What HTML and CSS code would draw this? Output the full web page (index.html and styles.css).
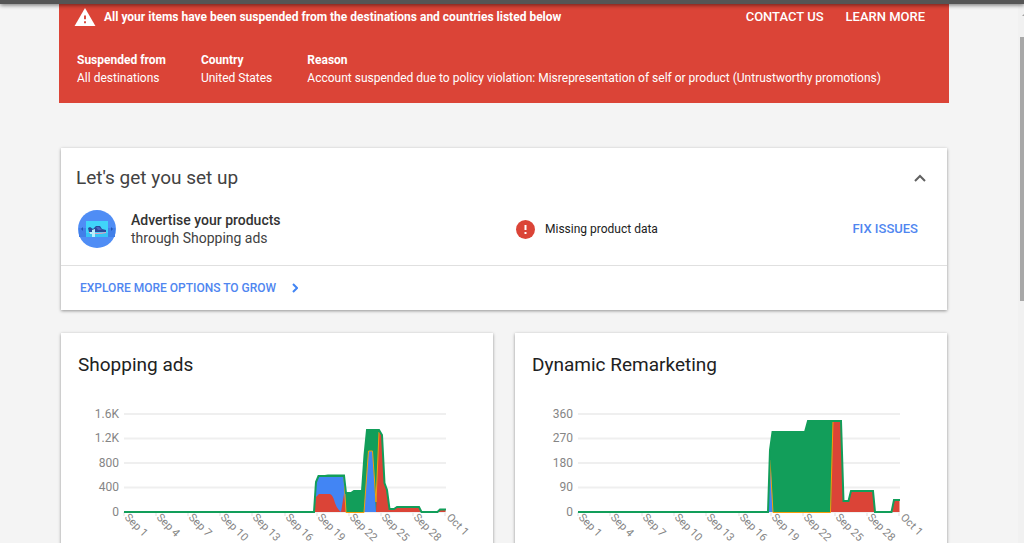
FILE: index.html
```
<!DOCTYPE html>
<html lang="en">
<head>
    <meta charset="utf-8">
    <title>Merchant overview</title>
    <link rel="stylesheet" href="styles.css">
</head>
<body>
    <header class="topbar"></header>
    <div class="scrollbar">
        <svg class="scroll-arrow" viewBox="0 0 4 32" aria-hidden="true">
            <path d="M2 11h2v-1z" fill="#555"/>
        </svg>
        <div class="scroll-thumb"></div>
    </div>
    <main class="page">
        <section class="banner">
            <div class="banner-head">
                <svg class="warning-icon" viewBox="0 0 22 19" aria-hidden="true">
                    <path d="M0 19h22L11 0z" fill="#fff"/>
                    <path d="M10 8h2v4h-2zm0 6h2v2h-2z" fill="#db4437"/>
                </svg>
                <strong class="banner-title">All your items have been suspended from the destinations and countries listed below</strong>
                <nav class="banner-links">
                    <a href="#contact">CONTACT US</a>
                    <a href="#learn">LEARN MORE</a>
                </nav>
            </div>
            <dl class="details">
                <div><dt>Suspended from</dt><dd>All destinations</dd></div>
                <div><dt>Country</dt><dd>United States</dd></div>
                <div><dt>Reason</dt><dd>Account suspended due to policy violation: Misrepresentation of self or product (Untrustworthy promotions)</dd></div>
            </dl>
        </section>

        <section class="card setup">
            <div class="setup-head">
                <h2>Let's get you set up</h2>
                <button class="collapse" type="button" aria-label="Collapse">
                    <svg viewBox="0 0 12 8" width="12" height="8">
                        <path d="M1 7l5-5 5 5" fill="none" stroke="#616161" stroke-width="2"/>
                    </svg>
                </button>
            </div>
            <div class="setup-row">
                <div class="program">
                    <svg class="program-icon" viewBox="0 0 38 38" aria-hidden="true">
                        <circle cx="19" cy="19" r="19" fill="#4f8df5"/>
                        <path d="M1 18h36v9H1z" fill="#417fe8"/>
                        <path d="M8 11h22v16H8z" fill="#40d4fa"/>
                        <path d="M8 23h22v4H8z" fill="#38c4f5"/>
                        <path d="M10 18l2-1 3 2 3-3 4 0 2 3 4 1 0 2H11z" fill="#294a9c"/>
                        <path d="M18 17l3 0 3 3-4 0z" fill="#4b63c0"/>
                        <path d="M11 22q8 2 17 0v1q-9 2-17 0z" fill="#ee9cba"/>
                        <path d="M14 20l3-1v8h-3v-3h-2v-2h2z" fill="#b9eefc"/>
                        <path d="M5 17v4l-2-2zM33 17v4l2-2z" fill="#2457b5"/>
                    </svg>
                    <p><b>Advertise your products</b><br>through Shopping ads</p>
                </div>
                <div class="status">
                    <svg viewBox="0 0 19 19" width="19" height="19" aria-hidden="true">
                        <circle cx="9.500" cy="9.500" r="9.500" fill="#db4437"/>
                        <path d="M8.500 5h2v5h-2zm0 7h2v2h-2z" fill="#fff"/>
                    </svg>
                    <span>Missing product data</span>
                </div>
                <a class="fix" href="#issues">FIX ISSUES</a>
            </div>
            <a class="explore" href="#programs">EXPLORE MORE OPTIONS TO GROW
                <svg viewBox="0 0 6 10" width="6" height="10" aria-hidden="true">
                    <path d="M1 1l4 4-4 4" fill="none" stroke="#4285f4" stroke-width="2"/>
                </svg>
            </a>
        </section>

        <div class="charts">
            <section class="card chart">
                <h2>Shopping ads</h2>
                <svg viewBox="0 0 398 160" role="img" aria-label="Shopping ads by day">
                    <path class="grid" d="M46 14h322M46 38.500h322M46 63h322M46 87.500h322M46 112h322"/>
                    <path class="grid" d="M46 112v4M78 112v4M110 112v4M142 112v4M174 112v4M207 112v4M239 112v4M271 112v4M303 112v4M335 112v4M367 112v4"/>
                    <path class="green" d="M236 112L238 82 240.500 76 247 76 266 75.500 268 93 273 93 276 91 284 91 286.500 55 289 30 301 30 304 35 306.500 83 309 90 311.500 109 311.500 112z"/>
                    <path class="blue" d="M236 112L238 82 241 77 266 77 268 112zM286 112L290.500 51H294.500L298 112z"/>
                    <path class="red" d="M236 112L238 97 241 94H252Q255 95 257 103 259 109 263 112L266 94 268 112zM298 112L301 32 304 36 306.500 83 309 90 311.500 109H316L319 107H341L343.500 112zM359.500 112L362 109H367.500V112z"/>
                    <path class="orange" d="M266 77L268 112.500H286L290.500 51H294.500L298 102 301 32"/>
                    <path class="line" d="M46 112H236L238 82 240.500 76H247L250 75.500H266L268 93H273L276 91H284L286.500 55 289 30H301L304 35 306.500 83 309 90 311.500 109H316L319 107H341L343.500 112H359.500L362 109.500H368"/>
                    <g class="values">
                        <text x="41" y="18">1.6K</text>
                        <text x="41" y="42">1.2K</text>
                        <text x="41" y="67">800</text>
                        <text x="41" y="91">400</text>
                        <text x="41" y="116">0</text>
                    </g>
                    <g class="dates">
                        <text transform="translate(46 118) rotate(45)">Sep 1</text>
                        <text transform="translate(78 118) rotate(45)">Sep 4</text>
                        <text transform="translate(110 118) rotate(45)">Sep 7</text>
                        <text transform="translate(142 118) rotate(45)">Sep 10</text>
                        <text transform="translate(174 118) rotate(45)">Sep 13</text>
                        <text transform="translate(207 118) rotate(45)">Sep 16</text>
                        <text transform="translate(239 118) rotate(45)">Sep 19</text>
                        <text transform="translate(271 118) rotate(45)">Sep 22</text>
                        <text transform="translate(303 118) rotate(45)">Sep 25</text>
                        <text transform="translate(335 118) rotate(45)">Sep 28</text>
                        <text transform="translate(368 118) rotate(45)">Oct 1</text>
                    </g>
                </svg>
            </section>
            <section class="card chart">
                <h2>Dynamic Remarketing</h2>
                <svg viewBox="0 0 398 160" role="img" aria-label="Dynamic Remarketing by day">
                    <path class="grid" d="M46 14h322M46 38.500h322M46 63h322M46 87.500h322M46 112h322"/>
                    <path class="grid" d="M46 112v4M78 112v4M110 112v4M142 112v4M174 112v4M207 112v4M239 112v4M271 112v4M303 112v4M335 112v4M367 112v4"/>
                    <path class="green" d="M236 112L238 50 240.500 31.500H273L276 20.500H301V112z"/>
                    <path class="blue" d="M236 112L238.500 60 241 112z"/>
                    <path class="red" d="M299 112L301 20.500H309L311.500 101H316.500L319 91H341L343 112zM359.500 112L362 99.500H367.500V112z"/>
                    <path class="orange" d="M238 60L241 112.500H298.500L301 21"/>
                    <path class="line" d="M46 112H236L238 50 240.500 32H273L276 21H309L311.500 101H316.500L319 91H341L343 112H359.500L362 100H368"/>
                    <g class="values">
                        <text x="41" y="18">360</text>
                        <text x="41" y="42">270</text>
                        <text x="41" y="67">180</text>
                        <text x="41" y="91">90</text>
                        <text x="41" y="116">0</text>
                    </g>
                    <g class="dates">
                        <text transform="translate(46 118) rotate(45)">Sep 1</text>
                        <text transform="translate(78 118) rotate(45)">Sep 4</text>
                        <text transform="translate(110 118) rotate(45)">Sep 7</text>
                        <text transform="translate(142 118) rotate(45)">Sep 10</text>
                        <text transform="translate(174 118) rotate(45)">Sep 13</text>
                        <text transform="translate(207 118) rotate(45)">Sep 16</text>
                        <text transform="translate(239 118) rotate(45)">Sep 19</text>
                        <text transform="translate(271 118) rotate(45)">Sep 22</text>
                        <text transform="translate(303 118) rotate(45)">Sep 25</text>
                        <text transform="translate(335 118) rotate(45)">Sep 28</text>
                        <text transform="translate(368 118) rotate(45)">Oct 1</text>
                    </g>
                </svg>
            </section>
        </div>
    </main>
</body>
</html>
```

FILE: styles.css
```
* {
    box-sizing: border-box;
}
body {
    margin: 0;
    height: 100vh;
    overflow: hidden;
    background: #f4f4f4;
    color: #212121;
    font: 13px/18px Roboto, sans-serif;
}
h2, p, dl, dd {
    margin: 0;
}
a {
    text-decoration: none;
    font-weight: 500;
}

/* fixed chrome */
.topbar {
    position: relative;
    z-index: 2;
    height: 4px;
    background: #555;
    box-shadow: 0 1px 4px rgba(0, 0, 0, .6);
}
.scrollbar {
    position: fixed;
    top: 4px;
    right: 0;
    bottom: 0;
    width: 6px;
    padding-left: 2px;
    background: #f1f1f1;
}
.scroll-arrow {
    display: block;
    width: 4px;
    height: 33px;
}
.scroll-thumb {
    height: 49%;
    background: #a8a8a8;
}
.page {
    max-width: 938px;
    margin: 0 auto;
    padding: 0 32px 0 16px;
}

/* suspension banner */
.banner {
    padding: 4px 24px 16px 15px;
    background: #db4437;
    color: #fff;
}
.banner-head {
    display: flex;
    align-items: center;
    gap: 8px;
}
.warning-icon {
    width: 22px;
    height: 18px;
}
.banner-title {
    font-size: 12px;
}
.banner-links {
    display: flex;
    gap: 22px;
    margin-left: auto;
}
.banner-links a {
    color: #fff;
}
.details {
    display: flex;
    gap: 35px;
    padding: 25px 0 0 3px;
    font-size: 12px;
}
.details dt {
    font-weight: 700;
}

.card {
    background: #fff;
    box-shadow: 0 1px 3px rgba(0, 0, 0, .4);
}
.card h2 {
    font-size: 19px;
    line-height: 24px;
    font-weight: 400;
}

/* setup card */
.setup {
    margin: 45px 2px 0;
}
.setup-head {
    display: flex;
    justify-content: space-between;
    align-items: center;
    padding: 18px 21px 18px 15px;
}
.setup-head h2 {
    color: #424242;
}
.collapse {
    display: flex;
    padding: 0;
    border: 0;
    background: none;
}
.setup-row {
    display: grid;
    grid-template-columns: 438px 1fr auto;
    align-items: center;
    padding: 2px 29px 17px 17px;
    border-bottom: 1px solid #e0e0e0;
}
.program {
    display: flex;
    align-items: center;
    gap: 15px;
    color: #424242;
    font-size: 14px;
}
.program b {
    font-weight: 500;
    color: #333;
}
.program-icon {
    width: 38px;
    height: 38px;
}
.status {
    display: flex;
    align-items: center;
    gap: 10px;
    font-size: 12px;
}
.fix, .explore {
    color: #4f86f0;
}
.explore {
    display: flex;
    align-items: center;
    gap: 16px;
    padding: 13px 19px;
    font-size: 12px;
}

/* charts */
.charts {
    display: grid;
    grid-template-columns: 1fr 1fr;
    gap: 22px;
    margin: 23px 2px 0;
}
.chart {
    padding: 20px 17px;
}
.chart svg {
    display: block;
    width: 100%;
    margin-top: 23px;
    overflow: visible;
}
.grid {
    fill: none;
    stroke: #efefef;
    stroke-width: 2px;
}
.green {
    fill: #129e5a;
}
.blue {
    fill: #4285f4;
}
.red {
    fill: #db4437;
}
.orange {
    fill: none;
    stroke: #f99d0b;
    stroke-width: 1px;
}
.line {
    fill: none;
    stroke: #129e5a;
    stroke-width: 2px;
}
.values, .dates {
    fill: #858585;
    font-size: 12px;
}
.values {
    text-anchor: end;
}
.dates {
    font-size: 11px;
}
```
